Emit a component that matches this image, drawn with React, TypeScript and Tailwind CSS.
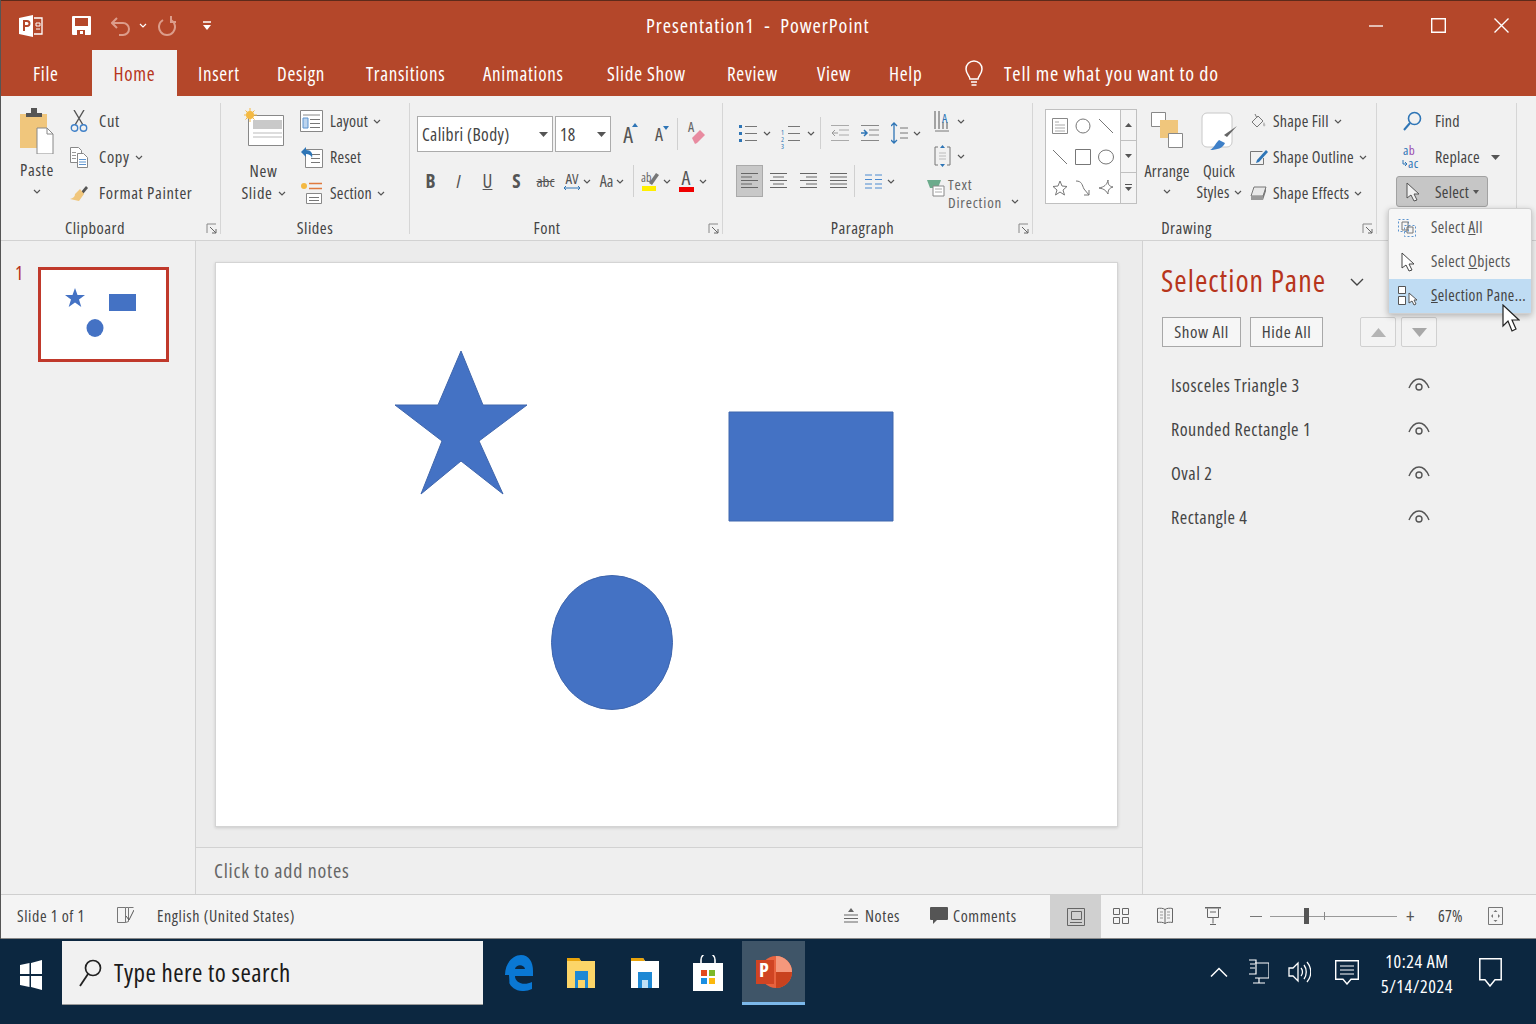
import React from "react";

const S = ({ w, h, children, className = "" }: { w: number; h: number; children: React.ReactNode; className?: string }) => (
  <svg width={w} height={h} viewBox={`0 0 ${w} ${h}`} fill="none" className={"shrink-0 " + className}>{children}</svg>
);
const Chev = ({ c = "#555" }: { c?: string }) => (
  <S w={8} h={5}><path d="M1 1l3 3 3-3" stroke={c} strokeWidth="1.2" /></S>
);
const Tri = () => <S w={9} h={5}><path d="M0 0h9L4.5 5z" fill="#555" /></S>;
const Launcher = () => (
  <S w={11} h={11}><path d="M1 10V1h9" stroke="#888" /><path d="M4 4l6 6M10 6v4H6" stroke="#666" /></S>
);
const Lines = ({ x = 0, y = 0, w = 16, n = 4, g = 4, c = "#777" }: { x?: number; y?: number; w?: number; n?: number; g?: number; c?: string }) => (
  <>{Array.from({ length: n }).map((_, i) => <path key={i} d={`M${x} ${y + i * g + 0.5}h${w}`} stroke={c} />)}</>
);
const Eye = () => (
  <S w={22} h={14}><path d="M1 10C4 3 8 1 11 1s7 2 10 9" stroke="#555" strokeWidth="1.4" /><circle cx="11" cy="9" r="3" stroke="#555" strokeWidth="1.4" /></S>
);
const Cell = ({ className, children }: { className: string; children?: React.ReactNode }) => (
  <div className={"flex items-center justify-center shrink-0 " + className}>{children}</div>
);
const Sep = ({ className = "" }: { className?: string }) => <div className={"w-px h-[32px] bg-[#d0d0d0] shrink-0 " + className} />;
const Group = ({ className, label, labelClass = "", launcher, children }: { className: string; label: string; labelClass?: string; launcher?: boolean; children: React.ReactNode }) => (
  <div className={"h-[131px] shrink-0 " + className}>
    <div className="h-[114px]">{children}</div>
    <div className="h-[22px] grid grid-cols-[1fr_auto_1fr] items-center">
      <span />
      <span className={"text-[16.5px] tracking-[0.5px] leading-[22px] text-[#444] " + labelClass}>{label}</span>
      {launcher ? <span className="justify-self-end mr-[3px] flex"><Launcher /></span> : <span />}
    </div>
  </div>
);
const Row = ({ icon, iconW, label, chev, narrow }: { icon: React.ReactNode; iconW: string; label: string; chev?: boolean; narrow?: boolean }) => (
  <div className={"h-[36px] flex items-center text-[#444] whitespace-nowrap " + (narrow ? "text-[16px] tracking-[0.25px]" : "text-[16.5px] tracking-[0.65px]")}>
    <div className={"flex items-center shrink-0 " + iconW}>{icon}</div>
    <span>{label}</span>
    {chev && <span className="ml-[5px] flex"><Chev /></span>}
  </div>
);

const PptLogo = () => (
  <S w={24} h={22}>
    <path d="M0 3l14-3v22L0 19z" fill="#fff" />
    <path d="M4 5h4a3 3 0 010 7H6v4H4zM6 7v3h2a1.500 1.500 0 000-3z" fill="#b4472a" />
    <path d="M15 3h8v16h-8" stroke="#fff" strokeWidth="1.3" />
    <path d="M17 8h4v3h-4zM17 14h4" stroke="#fff" />
  </S>
);

const tabs = [
  { t: "File", c: "w-[92px] pl-[33px] text-white" },
  { t: "Home", c: "w-[85px] justify-center bg-[#f1f1f1] text-[#b7351c]" },
  { t: "Insert", c: "w-[100px] pl-[21px] text-white" },
  { t: "Design", c: "w-[89px] text-white" },
  { t: "Transitions", c: "w-[117px] text-white" },
  { t: "Animations", c: "w-[124px] text-white" },
  { t: "Slide Show", c: "w-[120px] text-white" },
  { t: "Review", c: "w-[90px] text-white" },
  { t: "View", c: "w-[72px] text-white" },
  { t: "Help", c: "w-[75px] text-white" },
];

const TitleBar = () => (
  <div className="h-[50px] shrink-0 bg-[#b4472a] border-t border-[#5d2a1a] flex items-center text-white">
    <div className="w-[646px] flex items-center shrink-0">
      <div className="ml-[19px]"><PptLogo /></div>
      <div className="ml-[29px]">
        <S w={19} h={19}>
          <path d="M0 1a1 1 0 011-1h17a1 1 0 011 1v17a1 1 0 01-1 1H1a1 1 0 01-1-1z" fill="#fff" />
          <path d="M3 2h13v8H3z" fill="#b4472a" /><path d="M5 14h8v5H5z" fill="#b4472a" /><path d="M8 15h3v3H8z" fill="#fff" />
        </S>
      </div>
      <div className="ml-[20px]">
        <S w={20} h={20}><path d="M6 2L1 7l5 5" stroke="#dc9d8b" strokeWidth="2" /><path d="M1 7h11a6 6 0 010 12H8" stroke="#dc9d8b" strokeWidth="2" /></S>
      </div>
      <div className="ml-[8px] flex"><Chev c="#fff" /></div>
      <div className="ml-[10px]">
        <S w={19} h={20}><path d="M6 4a8 8 0 108 0" stroke="#dc9d8b" strokeWidth="2" /><path d="M14 0v6h5" stroke="#dc9d8b" strokeWidth="2" /></S>
      </div>
      <div className="ml-[27px]">
        <S w={8} h={10}><path d="M0 1h8" stroke="#fff" strokeWidth="1.5" /><path d="M0 4h8L4 9z" fill="#fff" /></S>
      </div>
    </div>
    <div className="flex-1 text-[20px] tracking-[1px] whitespace-pre">Presentation1  -  PowerPoint</div>
    <div className="flex items-center shrink-0">
      <S w={14} h={2}><path d="M0 1h14" stroke="#fff" strokeWidth="1.3" /></S>
      <div className="ml-[48px]"><S w={15} h={15}><path d="M.7.7h13.6v13.6H.7z" stroke="#fff" strokeWidth="1.4" /></S></div>
      <div className="ml-[48px] mr-[27px]"><S w={15} h={15}><path d="M.5.5l14 14M14.5.5l-14 14" stroke="#fff" strokeWidth="1.4" /></S></div>
    </div>
  </div>
);

const TabRow = () => (
  <div className="h-[46px] shrink-0 bg-[#b4472a] flex items-stretch text-[19px] tracking-[0.7px] pt-[2px]">
    {tabs.map((t) => <div key={t.t} className={"flex items-center shrink-0 -mt-[2px] pt-[2px] " + t.c}>{t.t}</div>)}
    <div className="w-[40px] flex items-center justify-start shrink-0">
      <S w={20} h={28}>
        <path d="M6 19c0-3-4-5-4-10a8 8 0 0116 0c0 5-4 7-4 10z" stroke="#fff" strokeWidth="1.5" />
        <path d="M7 22h6M7.5 25h5" stroke="#fff" strokeWidth="1.5" />
      </S>
    </div>
    <div className="flex items-center text-white whitespace-nowrap text-[20px] tracking-[0.8px]">Tell me what you want to do</div>
  </div>
);

const Paste = () => (
  <S w={34} h={46}>
    <path d="M0 6h27v34H0z" fill="#f0c67c" />
    <path d="M6 5h5V0h6v5h5v4H6z" fill="#555" />
    <path d="M17 20h10l6 6v20H17z" fill="#fff" stroke="#888" />
    <path d="M27 20v6h6" stroke="#888" />
  </S>
);

const Clipboard = () => (
  <Group className="w-[221px] border-r border-[#d6d6d6]" label="Clipboard" labelClass="mr-[30px]" launcher>
    <div className="flex pl-[20px]">
      <div className="w-[34px] flex flex-col items-center pt-[5px] text-[16.5px] tracking-[0.65px] text-[#444]">
        <Paste />
        <div className="mt-[6px] h-[20px] leading-[20px]">Paste</div>
        <div className="mt-[9px] flex"><Chev /></div>
      </div>
      <div className="ml-[16px]">
        <Row iconW="w-[29px]" label="Cut" icon={
          <S w={18} h={22}><path d="M4 0l9 15M14 0L5 15" stroke="#555" strokeWidth="1.4" /><circle cx="4.5" cy="18" r="3.2" stroke="#3f80c8" strokeWidth="1.4" /><circle cx="13.5" cy="18" r="3.2" stroke="#3f80c8" strokeWidth="1.4" /></S>
        } />
        <Row iconW="w-[29px]" label="Copy" chev icon={
          <S w={18} h={21}><path d="M.5.5h8l3 3v12H.5z" fill="#fff" stroke="#888" /><path d="M7.5 6.5h6l4 4v10h-10z" fill="#fff" stroke="#888" /><Lines x={9} y={12} w={7} n={3} g={2.5} c="#5d94cf" /><Lines x={2} y={5} w={4} n={3} g={3} c="#999" /></S>
        } />
        <Row iconW="w-[29px]" label="Format Painter" icon={
          <S w={18} h={18}><path d="M11 8l5-6 2 2-5 6z" fill="#555" /><path d="M10 5l4 5-5 7-9-2c3-1 5-2 5-5z" fill="#f0c67c" /></S>
        } />
      </div>
    </div>
  </Group>
);

const Slides = () => (
  <Group className="w-[189px] border-r border-[#d6d6d6]" label="Slides">
    <div className="flex pl-[20px] text-[16.5px] tracking-[0.65px] text-[#444]">
      <div className="w-[45px] flex flex-col items-center pt-[5px]">
        <S w={40} h={40}>
          <path d="M4.5 7.5h35v30h-35z" fill="#fff" stroke="#888" />
          <path d="M9 12h29v9H9z" fill="#c9c9c9" /><path d="M9 25h29M9 29h29" stroke="#bbb" />
          <circle cx="6" cy="7" r="4" fill="#f4b942" /><path d="M6 0v14M0 7h13M1.5 2.5l9 9M10.500 2.500l-9 9" stroke="#f4b942" />
        </S>
        <div className="mt-[13px] leading-[20px]">New</div>
        <div className="mt-[2px] leading-[20px] flex items-center whitespace-nowrap">Slide<span className="ml-[5px] flex"><Chev /></span></div>
      </div>
      <div className="ml-[14px]">
        <Row narrow iconW="w-[30px]" label="Layout" chev icon={
          <S w={23} h={22}><path d="M.5.5h22v21H.5z" fill="#fff" stroke="#888" /><path d="M3 5h17" stroke="#888" /><path d="M3 8h5v10H3z" fill="#bcd4ee" stroke="#5d94cf" /><Lines x={10} y={9} w={10} n={3} g={4} /></S>
        } />
        <Row narrow iconW="w-[30px]" label="Reset" icon={
          <S w={23} h={22}><path d="M5.500 3.500h17v18h-17z" fill="#fff" stroke="#888" /><Lines x={11} y={8} w={9} n={3} g={4} /><path d="M1 6l5-5v3c5 0 7 3 6 8-1-3-3-4-6-4v3z" fill="#2e75b6" /></S>
        } />
        <Row narrow iconW="w-[30px]" label="Section" chev icon={
          <S w={22} h={22}><circle cx="4" cy="4" r="3" fill="#f4b942" /><path d="M9 1.500h13M9 6.500h13" stroke="#e07a3e" strokeWidth="1.5" /><path d="M6.500 11.500h15v10h-15z" fill="#fff" stroke="#888" /><Lines x={9} y={15} w={10} n={2} g={3} /></S>
        } />
      </div>
    </div>
  </Group>
);

const Combo = ({ className, label }: { className: string; label: string }) => (
  <div className={"h-[36px] bg-white border border-[#ababab] flex items-center justify-between pl-[4px] pr-[4px] text-[17.5px] tracking-[0.35px] text-[#444] shrink-0 " + className}>
    <span className="whitespace-nowrap">{label}</span><Tri />
  </div>
);

const Font = () => (
  <Group className="w-[313px] border-r border-[#d6d6d6]" label="Font" labelClass="mr-[38px]" launcher>
    <div className="pl-[7px] pt-[13px]">
      <div className="flex items-center">
        <Combo className="w-[136px]" label="Calibri (Body)" />
        <Combo className="w-[56px] ml-[2px]" label="18" />
        <Cell className="w-[24px] ml-[5px] text-[22px] text-[#555] relative">A<span className="absolute right-[2px] top-[5px] w-0 h-0 border-x-[3px] border-x-transparent border-b-[4px] border-b-[#2e75b6]" /></Cell>
        <Cell className="w-[24px] ml-[7px] text-[18px] text-[#555] relative">A<span className="absolute right-[2px] top-[5px] w-0 h-0 border-x-[3px] border-x-transparent border-t-[4px] border-t-[#2e75b6]" /></Cell>
        <Sep className="ml-[6px] h-[26px]" />
        <Cell className="w-[24px] ml-[6px] relative">
          <span className="absolute left-[4px] top-[-4px] text-[14px] leading-[14px] text-[#666]">A</span>
          <S w={17} h={21}><path d="M4 14l8-8 5 5-8 8-2 1z" fill="#e88ba0" /></S>
        </Cell>
      </div>
      <div className="flex items-center h-[32px] mt-[13px] text-[#555] text-[19px]">
        <Cell className="w-[27px] font-bold">B</Cell>
        <Cell className="w-[29px] italic">I</Cell>
        <Cell className="w-[29px] underline">U</Cell>
        <Cell className="w-[29px] font-bold">S</Cell>
        <Cell className="w-[29px] text-[15px] line-through">abc</Cell>
        <Cell className="w-[36px]">
          <div className="flex flex-col items-center leading-[14px] text-[15px] -ml-[2px]">AV<S w={18} h={6}><path d="M1 3h16M3 1L1 3l2 2M15 1l2 2-2 2" stroke="#2e75b6" /></S></div>
          <span className="flex ml-[2px]"><Chev /></span>
        </Cell>
        <Cell className="w-[32px] text-[16px]">Aa<span className="flex ml-[3px]"><Chev /></span></Cell>
        <Sep className="ml-[5px] h-[26px]" />
        <Cell className="w-[24px] ml-[4px] relative">
          <span className="absolute left-[3px] top-[2px] text-[12px] leading-[12px] text-[#666]">ab</span>
          <S w={17} h={22}><path d="M7 13l7-10 3 2-7 10z" fill="#777" /><path d="M0 16h14v5H0z" fill="#ffef00" /></S>
        </Cell>
        <span className="flex ml-[1px]"><Chev /></span>
        <Cell className="w-[24px] ml-[3px]">
          <div className="flex flex-col items-center leading-[16px] text-[#555] text-[20px]">A<span className="w-[15px] h-[5px] bg-[#f00000] mt-[1px]" /></div>
        </Cell>
        <span className="flex ml-[1px]"><Chev /></span>
      </div>
    </div>
  </Group>
);

const Bullets = () => (
  <S w={20} h={20}><path d="M1 2h3v3H1zM1 9h3v3H1zM1 16h3v3H1z" fill="#2e75b6" /><path d="M7 3.500h12M7 10.500h12M7 17.500h12" stroke="#777" /></S>
);
const AlignIcon = ({ kind }: { kind: "l" | "c" | "r" | "j" }) => {
  const rows = kind === "j" ? [0, 0, 0, 0, 0] : [0, 3, 0, 3, 0];
  return (
    <S w={17} h={16}>
      {rows.map((d, i) => {
        const w = 17 - (kind === "j" ? 0 : d * 2);
        const x = kind === "l" || kind === "j" ? 0 : kind === "c" ? (17 - w) / 2 : 17 - w;
        return <path key={i} d={`M${x} ${i * 3.5 + 0.5}h${w}`} stroke="#666" />;
      })}
    </S>
  );
};

const Paragraph = () => (
  <Group className="w-[310px] border-r border-[#d6d6d6]" label="Paragraph" labelClass="mr-[30px]" launcher>
    <div className="flex pl-[13px]">
      <div className="w-[194px] pt-[14px]">
        <div className="flex items-center h-[32px]">
          <Cell className="w-[24px]"><Bullets /></Cell>
          <Cell className="w-[14px]"><Chev /></Cell>
          <Cell className="w-[34px] relative">
            <span className="absolute left-[7px] top-[6px] text-[7px] leading-[7px] text-[#2e75b6] flex flex-col"><span>1</span><span>2</span><span>3</span></span>
            <S w={20} h={20}><path d="M7 3.500h12M7 10.500h12M7 17.500h12" stroke="#777" /></S>
          </Cell>
          <Cell className="w-[6px]"><Chev /></Cell>
          <Sep className="ml-[6px] h-[26px]" />
          <Cell className="w-[24px] ml-[7px]">
            <S w={18} h={16}><path d="M0 .500h18M8 5h10M8 10h10M0 15.500h18" stroke="#aaa" /><path d="M7 8H1M4 5L1 8l3 3" stroke="#999" /></S>
          </Cell>
          <Cell className="w-[24px] ml-[6px]">
            <S w={18} h={16}><path d="M0 .500h18M8 5h10M8 10h10M0 15.500h18" stroke="#888" /><path d="M0 8h6M3 5l3 3-3 3" stroke="#2e75b6" strokeWidth="1.5" /></S>
          </Cell>
          <Cell className="w-[24px] ml-[6px]">
            <S w={18} h={22}><path d="M3 1v20M0 4l3-3 3 3M0 18l3 3 3-3" stroke="#2e75b6" strokeWidth="1.3" /><path d="M9 6h8M9 11h8M9 16h8" stroke="#777" /></S>
          </Cell>
          <Cell className="w-[10px]"><Chev /></Cell>
        </div>
        <div className="flex items-center h-[32px] mt-[16px]">
          <Cell className="w-[27px] h-[32px] bg-[#c8c8c8] border border-[#aaa]"><AlignIcon kind="l" /></Cell>
          <Cell className="w-[24px] ml-[3px]"><AlignIcon kind="c" /></Cell>
          <Cell className="w-[24px] ml-[6px]"><AlignIcon kind="r" /></Cell>
          <Cell className="w-[24px] ml-[6px]"><AlignIcon kind="j" /></Cell>
          <Sep className="ml-[4px] h-[26px]" />
          <Cell className="w-[24px] ml-[6px]">
            <S w={17} h={15}><path d="M0 1h7M10 1h7M0 5.500h7M10 5.500h7M0 10h7M10 10h7M0 14h7M10 14h7" stroke="#4a8ad0" /></S>
          </Cell>
          <Cell className="w-[10px] ml-[1px]"><Chev /></Cell>
        </div>
      </div>
      <div className="w-[100px] -ml-[1px]">
        <div className="h-[36px] flex items-center">
          <Cell className="w-[26px] relative">
            <span className="absolute left-[13px] top-[3px] text-[12px] leading-[12px] text-[#2e75b6]">A</span>
            <S w={17} h={22}><path d="M1 1v18M5 1v18M9 12v7M13 12v7" stroke="#555" /><path d="M1 21h14" stroke="#777" /></S>
          </Cell>
          <Cell className="w-[12px]"><Chev /></Cell>
        </div>
        <div className="h-[34px] flex items-center">
          <Cell className="w-[26px]"><S w={17} h={24}><path d="M4 3H1v18h3M13 3h3v18h-3" stroke="#777" /><path d="M5 9h7M5 12h7M5 15h7" stroke="#bbb" /><path d="M8.500 1L6 4h5zM8.500 23L6 20h5z" fill="#2e75b6" /></S></Cell>
          <Cell className="w-[12px]"><Chev /></Cell>
        </div>
        <div className="flex -ml-[2px]">
          <div className="w-[21px] pt-[6px]"><S w={18} h={18}><path d="M0 1h14l-3 8H3z" fill="#6cab8c" /><path d="M6 7h11v10H6z" fill="#fff" stroke="#888" /><path d="M8 10h7M8 13h7" stroke="#aaa" /></S></div>
          <div className="text-[15px] tracking-[0.8px] leading-[18px] text-[#666] pt-[2px] w-[54px] whitespace-nowrap">Text<br />Direction</div>
          <div className="flex items-end pb-[7px] ml-[9px]"><Chev /></div>
        </div>
      </div>
    </div>
  </Group>
);

const shapeCells = [
  <S key="a" w={16} h={16}><path d="M.5.5h15v15H.5z" fill="#fff" stroke="#888" /><path d="M3 4h4M3 7h10M3 10h10M3 13h10" stroke="#aaa" /></S>,
  <S key="b" w={16} h={16}><circle cx="8" cy="8" r="7" stroke="#777" /></S>,
  <S key="c" w={16} h={16}><path d="M1 1l14 14" stroke="#777" /></S>,
  <S key="d" w={16} h={16}><path d="M1 1l14 14" stroke="#777" /></S>,
  <S key="e" w={16} h={16}><path d="M.5.5h15v15H.5z" stroke="#777" /></S>,
  <S key="f" w={16} h={16}><ellipse cx="8" cy="8" rx="7.500" ry="7" stroke="#777" /></S>,
  <S key="g" w={16} h={16}><path d="M8 1l2 5 5 .5-4 3.500 1.500 5L8 12l-4.500 3L5 10 1 6.500 6 6z" stroke="#777" /></S>,
  <S key="h" w={16} h={16}><path d="M1 1c6 0 6 4 8 8l5 6M14 10v5h-5" stroke="#777" /></S>,
  <S key="i" w={16} h={16}><path d="M10 0c0 5 1 6 5 7-3 1-5 2-5 7-2-3-3-5-9-6 5-1 8-3 9-8z" stroke="#777" /></S>,
];

const Drawing = () => (
  <Group className="w-[344px] border-r border-[#d6d6d6]" label="Drawing" labelClass="mr-[36px]" launcher>
    <div className="flex pl-[12px] text-[16px] tracking-[0.25px] text-[#444]">
      <div className="mt-[6px] w-[92px] h-[95px] border border-[#c0c0c0] bg-white flex shrink-0">
        <div className="w-[75px] grid grid-cols-3 grid-rows-3 place-items-center px-[2px]">{shapeCells}</div>
        <div className="w-[16px] flex flex-col border-l border-[#c0c0c0] bg-[#f4f4f4]">
          <Cell className="flex-1 border-b border-[#c0c0c0]"><S w={7} h={4}><path d="M0 4h7L3.500 0z" fill="#555" /></S></Cell>
          <Cell className="flex-1 border-b border-[#c0c0c0]"><S w={7} h={4}><path d="M0 0h7L3.500 4z" fill="#555" /></S></Cell>
          <Cell className="flex-1"><S w={7} h={7}><path d="M0 .500h7" stroke="#555" /><path d="M0 3h7L3.500 7z" fill="#555" /></S></Cell>
        </div>
      </div>
      <div className="w-[48px] ml-[6px] flex flex-col items-center pt-[9px] shrink-0">
        <S w={32} h={36}><path d="M.5.500h14v14H.5z" fill="#fff" stroke="#888" /><path d="M9 8h18v18H9z" fill="#f0c67c" /><path d="M17.500 21.500h14v14h-14z" fill="#fff" stroke="#888" /></S>
        <div className="mt-[13px] leading-[20px]">Arrange</div>
        <div className="mt-[8px] flex"><Chev /></div>
      </div>
      <div className="w-[48px] ml-[4px] flex flex-col items-center pt-[9px] shrink-0">
        <S w={36} h={38}>
          <rect x="1" y="1" width="30" height="34" rx="5" fill="#fff" stroke="#c8c8c8" />
          <path d="M36 14L26 25l-3-2z" fill="#666" /><path d="M9 38c3-1 5-6 9-10l6 3c-2 5-8 7-15 7z" fill="#3f80c8" />
        </S>
        <div className="mt-[11px] leading-[20px]">Quick</div>
        <div className="mt-[1px] leading-[20px] flex items-center whitespace-nowrap">Styles<span className="ml-[4px] flex"><Chev /></span></div>
      </div>
      <div className="ml-[7px]">
        <Row narrow iconW="w-[23px]" label="Shape Fill" chev icon={
          <S w={16} h={16}><path d="M2 9l6-6 5 5-6 6z" stroke="#777" /><path d="M5 1l2 4" stroke="#777" /><path d="M14 9c1 2 2 3 1 4s-2 0-2-1 0-2 1-3z" fill="#bbb" /></S>
        } />
        <Row narrow iconW="w-[23px]" label="Shape Outline" chev icon={
          <S w={19} h={17}><path d="M.5 2.500h12M.5 2.500v13h13V9" stroke="#777" /><path d="M7 11l9-10 2 2-9 10-3 1z" fill="#2e75b6" /></S>
        } />
        <Row narrow iconW="w-[23px]" label="Shape Effects" chev icon={
          <S w={17} h={16}><path d="M1 11l3-9h12l-3 9z" fill="#e8e8e8" stroke="#777" /><path d="M1 11h12v4H1z" fill="#999" /><path d="M13 11l3-9v4l-3 9z" fill="#777" /></S>
        } />
      </div>
    </div>
  </Group>
);

const Editing = () => (
  <div className="w-[140px] h-[110px] shrink-0 border-r border-[#d6d6d6] pl-[19px] text-[16px] tracking-[0.25px] text-[#444]">
    <Row narrow iconW="w-[39px]" label="Find" icon={
      <div className="pl-[7px] flex"><S w={19} h={20}><circle cx="11.500" cy="7.500" r="6" stroke="#2e75b6" strokeWidth="1.6" /><path d="M7 12l-6 7" stroke="#2e75b6" strokeWidth="2" /></S></div>
    } />
    <div className="h-[36px] flex items-center whitespace-nowrap">
      <div className="w-[39px] pl-[6px] shrink-0 flex">
        <div className="flex flex-col text-[13px] leading-[13px] tracking-[0.3px]">
          <span className="pl-[1px]"><span className="text-[#2e75b6]">a</span><span className="text-[#9b4fb0]">b</span></span>
          <span className="flex items-center text-[#2e75b6]"><S w={6} h={9}><path d="M1 1v4h4M3 3l2 2-2 2" stroke="#2e75b6" /></S>ac</span>
        </div>
      </div>
      <span>Replace</span>
      <span className="ml-[11px] flex"><Tri /></span>
    </div>
    <div className="h-[31px] w-[92px] mt-[1px] flex items-center rounded-[3px] bg-[#c6c6c6] border border-[#a2a2a2] whitespace-nowrap">
      <div className="w-[38px] pl-[9px] flex shrink-0">
        <S w={14} h={20}><path d="M1 1v15l4-3 3 6 3-1-3-6h5z" fill="#f1f1f1" stroke="#555" /></S>
      </div>
      <span>Select</span>
      <span className="ml-[4px] flex"><S w={6} h={4}><path d="M0 0h6L3 4z" fill="#555" /></S></span>
    </div>
  </div>
);

const Ribbon = () => (
  <div className="h-[145px] shrink-0 bg-[#f1f1f1] border-b border-[#d2d2d2] pt-[7px] flex">
    <Clipboard /><Slides /><Font /><Paragraph /><Drawing /><Editing />
  </div>
);

const ThumbPane = () => (
  <div className="w-[196px] shrink-0 border-r border-[#d2d2d2] pl-[15px] pt-[26px] flex items-start">
    <span className="w-[23px] text-[19px] leading-[20px] -mt-[4px] text-[#b7351c]">1</span>
    <div className="w-[131px] h-[95px] border-[3px] border-[#c0392b] bg-white">
      <svg width="125" height="89" viewBox="0 0 125 89" className="block">
        <path d="M34 18l2.500 7h7.500l-6 4.500 2.300 7.500-6.300-4.500-6.300 4.500 2.300-7.500-6-4.500h7.500z" fill="#4472c4" />
        <path d="M68 24h27v17H68z" fill="#4472c4" />
        <ellipse cx="54" cy="58" rx="8.500" ry="9" fill="#4472c4" />
      </svg>
    </div>
  </div>
);

const SlideCanvas = () => (
  <div className="flex-1 flex flex-col min-w-0">
    <div className="flex-1 pl-[19px] pt-[21px] bg-[#ececec]">
      <div className="w-[903px] h-[565px] bg-white border border-[#d4d4d4] shadow-[0_1px_3px_rgba(0,0,0,0.15)]">
        <svg width="901" height="563" viewBox="216 263 901 563" className="block">
          <path d="M461 351l22 54h44l-48 36 24 53-42-33-40 33 21-53-47-36h43z" fill="#4472c4" stroke="#3f66ad" />
          <path d="M729 412h164v109H729z" fill="#4472c4" stroke="#3f66ad" />
          <ellipse cx="612" cy="642.500" rx="60.500" ry="67" fill="#4472c4" stroke="#3f66ad" />
        </svg>
      </div>
    </div>
    <div className="h-[47px] shrink-0 border-t border-[#d2d2d2] bg-[#efefef] flex items-center pl-[18px] text-[20px] tracking-[0.8px] text-[#666]">Click to add notes</div>
  </div>
);

const paneRows = ["Isosceles Triangle 3", "Rounded Rectangle 1", "Oval 2", "Rectangle 4"];

const SelectionPane = () => (
  <div className="w-[394px] shrink-0 border-l border-[#d2d2d2] bg-[#f0f0f0] pl-[18px]">
    <div className="h-[76px] flex items-center">
      <span className="text-[#b7351c] text-[30px] tracking-[1px] leading-[36px] whitespace-nowrap pt-[4px] w-[189px]">Selection Pane</span>
      <span className="flex pt-[6px]"><S w={14} h={9}><path d="M1 1l6 6 6-6" stroke="#444" strokeWidth="1.4" /></S></span>
    </div>
    <div className="flex items-center ml-[1px] text-[17px] tracking-[0.6px] text-[#444]">
      <div className="w-[79px] h-[30px] bg-[#f6f6f6] border border-[#a8a8a8] flex items-center justify-center">Show All</div>
      <div className="w-[73px] h-[30px] ml-[9px] bg-[#f6f6f6] border border-[#a8a8a8] flex items-center justify-center">Hide All</div>
      <div className="w-[36px] h-[30px] ml-[37px] bg-[#f3f3f3] border border-[#d0d0d0] rounded-[2px] flex items-center justify-center"><S w={15} h={9}><path d="M0 9h15L7.500 0z" fill="#b4b4b4" /></S></div>
      <div className="w-[36px] h-[30px] ml-[5px] bg-[#f3f3f3] border border-[#d0d0d0] rounded-[2px] flex items-center justify-center"><S w={15} h={9}><path d="M0 0h15L7.500 9z" fill="#a8a8a8" /></S></div>
    </div>
    <div className="mt-[16px] pl-[10px]">
      {paneRows.map((r) => (
        <div key={r} className="h-[44px] flex items-center text-[18px] tracking-[0.5px] text-[#444]">
          <span className="w-[237px] whitespace-nowrap">{r}</span><Eye />
        </div>
      ))}
    </div>
  </div>
);

const StatusBar = () => (
  <div className="h-[45px] shrink-0 bg-[#f4f4f4] border-t border-[#cfcfcf] border-b border-b-[#888] pb-[1px] flex items-center text-[16px] tracking-[0.6px] text-[#444] whitespace-nowrap">
    <span className="w-[100px] pl-[17px] shrink-0">Slide 1 of 1</span>
    <span className="ml-[17px] flex shrink-0"><S w={17} h={18}><path d="M.5.500h8v15h-8zM8.500 15.500l3-1v-14h-3M11.500.500h5" stroke="#777" /><path d="M9 9l3 4 5-10" stroke="#555" /></S></span>
    <span className="ml-[23px] w-[687px] shrink-0">English (United States)</span>
    <span className="flex shrink-0"><S w={14} h={16}><path d="M7 0l3 4H4z" fill="#666" /><path d="M0 7h14M0 10.500h14M0 14h14" stroke="#666" /></S></span>
    <span className="ml-[7px] w-[65px] shrink-0">Notes</span>
    <span className="flex shrink-0"><S w={18} h={18}><path d="M1 0h16a1 1 0 011 1v11a1 1 0 01-1 1H7l-4 4v-4H1a1 1 0 01-1-1V1a1 1 0 011-1z" fill="#555" /></S></span>
    <span className="ml-[5px] w-[97px] shrink-0">Comments</span>
    <Cell className="w-[51px] h-[43px] self-start bg-[#d0d0d0]"><S w={18} h={18}><path d="M.5.500h17v17H.5z" stroke="#666" /><path d="M4.500 3.500h10v8h-10z" stroke="#666" /><path d="M3 14.500h12" stroke="#666" /></S></Cell>
    <Cell className="w-[40px]"><S w={16} h={16}><path d="M.5.500h6v6h-6zM9.500.500h6v6h-6zM.5 9.500h6v6h-6zM9.500 9.500h6v6h-6z" stroke="#666" /></S></Cell>
    <Cell className="w-[48px]"><S w={16} h={18}><path d="M8 2.500C6 1 3 1 .5 1.500v14c2.500-.5 5.500-.5 7.500 1 2-1.500 5-1.500 7.500-1v-14C13 1 10 1 8 2.500zM8 2.500v14" stroke="#666" /><path d="M3 5h3M3 8h3M3 11h3M10 5h3M10 8h3M10 11h3" stroke="#999" /></S></Cell>
    <Cell className="w-[48px]"><S w={16} h={18}><path d="M0 .500h16" stroke="#666" strokeWidth="2" /><path d="M2.500 1.500v9h11v-9M8 10.500v6M5 17.500h6M5 5h6" stroke="#666" /></S></Cell>
    <span className="ml-[13px] w-[12px] h-px bg-[#777] shrink-0" />
    <div className="ml-[8px] w-[127px] h-px bg-[#999] shrink-0 flex items-center relative">
      <span className="ml-[34px] w-[5px] h-[16px] bg-[#555] shrink-0" />
      <span className="ml-[15px] w-px h-[8px] bg-[#888] shrink-0" />
    </div>
    <span className="ml-[9px] text-[20px] w-[12px] leading-none text-[#555] shrink-0">+</span>
    <span className="ml-[20px] w-[26px] shrink-0 tracking-[0.2px]">67%</span>
    <span className="ml-[24px] flex shrink-0"><S w={15} h={18}><path d="M.5.500h14v17H.5z" stroke="#777" /><path d="M7.500 3l2 2h-4zM7.500 15l2-2h-4zM3 9l2-2v4zM12 9l-2-2v4z" fill="#777" /></S></span>
  </div>
);

const Taskbar = () => (
  <div className="h-[85px] shrink-0 bg-[#0c2740] flex items-start text-white relative">
    <div className="w-[62px] h-[72px] flex items-center justify-center shrink-0 pb-[1px]">
      <S w={22} h={30}><path d="M0 5l9.500-2v11H0zM11 3l11-3v14H11zM0 16h9.500v11L0 25zM11 16h11v14l-11-3z" fill="#fff" /></S>
    </div>
    <div className="w-[421px] h-[64px] mt-[2px] bg-[#f1f1f1] border-b border-[#9a9a9a] flex items-center shrink-0 text-[#1a1a1a] text-[25px] tracking-[0.5px]">
      <span className="ml-[17px] flex"><S w={23} h={28}><circle cx="14" cy="9" r="7.500" stroke="#222" strokeWidth="1.7" /><path d="M9 15L1 27" stroke="#222" strokeWidth="1.8" /></S></span>
      <span className="ml-[12px]">Type here to search</span>
    </div>
    <Cell className="w-[71px] h-[64px] mt-[2px]">
      <S w={30} h={36}><path d="M1 20C1 8 9 0 17 0c8 0 12 7 12 16v5H11c0 7 9 10 17 6v7c-11 5-21 0-23-7 1 5 0-6 0-7z" fill="#0a78d4" /><path d="M11 14c1-5 9-5 10 0z" fill="#0c2740" /></S>
    </Cell>
    <Cell className="w-[48px] h-[64px] mt-[2px] ml-[3px]">
      <S w={28} h={30}><path d="M0 0h12l2 3h14v27H0z" fill="#fcd568" /><path d="M0 0h12l2 3H0z" fill="#e8a30b" /><path d="M8 13h13v17H8z" fill="#1e88d4" /><path d="M11 22h7v8h-7z" fill="#fcd568" /></S>
    </Cell>
    <Cell className="w-[79px] h-[64px] mt-[2px]">
      <S w={28} h={30}><path d="M0 0h12l2 3h14v27H0z" fill="#fff" /><path d="M0 0h12l2 3H0z" fill="#e8a30b" /><path d="M7 14h14v16H7z" fill="#1e88d4" /><path d="M11 22h6v8h-6z" fill="#bfe0f6" /></S>
    </Cell>
    <Cell className="w-[47px] h-[64px] mt-[2px]">
      <S w={30} h={36}><path d="M8 8V5a7 7 0 0114 0v3" stroke="#fff" strokeWidth="1.6" /><path d="M0 8h30v28H0z" fill="#fff" /><path d="M8 15h6v6H8z" fill="#e24a1f" /><path d="M16 15h6v6h-6z" fill="#7db928" /><path d="M8 23h6v6H8z" fill="#1a8fe3" /><path d="M16 23h6v6h-6z" fill="#fbb80d" /></S>
    </Cell>
    <div className="w-[63px] h-[64px] mt-[2px] ml-[11px] bg-[#3f5568] border-b-[3px] border-[#7cb8ea] flex items-center justify-center shrink-0 relative">
      <S w={36} h={36}>
        <circle cx="20" cy="18" r="16" fill="#e8623e" /><path d="M20 2a16 16 0 0116 16H20z" fill="#f4987c" /><path d="M20 18h16a16 16 0 01-16 16z" fill="#c9421e" />
        <path d="M0 6h18v24H0z" fill="#d04423" />
      </S>
      <span className="absolute left-[17px] top-[19px] text-[20px] leading-[20px] font-bold text-white">P</span>
    </div>
    <div className="ml-[405px] h-[66px] flex items-center shrink-0">
      <S w={18} h={10}><path d="M1 9.500l8-8 8 8" stroke="#fff" strokeWidth="1.5" /></S>
      <span className="ml-[19px] flex"><S w={22} h={26}><path d="M8 4h14v15H8M2 1h7v14H2M12 19v5M6 24h12" stroke="#fff" strokeWidth="1.2" /><path d="M3 5h5M3 9h5" stroke="#fff" /></S></span>
      <span className="ml-[19px] flex"><S w={23} h={26}><path d="M1 9h4l5-5v18l-5-5H1z" stroke="#fff" strokeWidth="1.3" /><path d="M13 9c2 2 2 6 0 8M16 6c3 4 3 10 0 14M19 3c5 6 5 14 0 20" stroke="#fff" strokeWidth="1.3" /></S></span>
      <span className="ml-[24px] flex"><S w={24} h={25}><path d="M.7.700h22.600v18.600H16L12 24l-4-4.700H.7z" stroke="#fff" strokeWidth="1.4" /><path d="M5 6h14M5 10h14M5 14h14" stroke="#fff" /></S></span>
      <div className="ml-[10px] w-[96px] flex flex-col items-center text-[18px] tracking-[0.6px] leading-[25px] shrink-0 pt-[3px]"><span>10:24 AM</span><span>5/14/2024</span></div>
      <span className="ml-[14px] flex"><S w={23} h={29}><path d="M.8.800h21.400v21H16L11 28l-5-6.200H.8z" stroke="#fff" strokeWidth="1.5" /></S></span>
    </div>
  </div>
);

const SelectMenu = () => (
  <div className="absolute left-[1388px] top-[208px] w-[144px] h-[106px] bg-[#f6f6f6] border border-[#d0d0d0] rounded-[3px] shadow-[0_2px_6px_rgba(0,0,0,0.25)] flex flex-col pt-[2px] text-[15.5px] tracking-[0.4px] text-[#555] z-10 whitespace-nowrap">
    <div className="h-[34px] flex items-center">
      <span className="w-[42px] pl-[9px] flex shrink-0"><S w={18} h={18}><path d="M.5.500h10v12H.5z" stroke="#5d94cf" strokeDasharray="2 2" /><path d="M6.500 6.500h11v11h-11z" stroke="#5d94cf" strokeDasharray="2 2" /><path d="M4 3h6v8H4zM9 8h6v6H9z" stroke="#777" /></S></span>
      <span>Select <u>A</u>ll</span>
    </div>
    <div className="h-[34px] flex items-center">
      <span className="w-[42px] pl-[12px] flex shrink-0"><S w={13} h={20}><path d="M1 1v15l4-3 3 6 3-1-3-6h5z" fill="#fff" stroke="#444" /></S></span>
      <span>Select <u>O</u>bjects</span>
    </div>
    <div className="h-[34px] flex items-center bg-[#bfdcf3] text-[#444]">
      <span className="w-[42px] pl-[9px] flex shrink-0"><S w={19} h={20}><path d="M.5.500h7v7h-7zM.5 10.500h7v8h-7z" stroke="#555" fill="#fff" /><path d="M11 7v10l3-2 2 4 2-1-2-4h3z" fill="#fff" stroke="#555" /></S></span>
      <span><u>S</u>election Pane...</span>
    </div>
  </div>
);

export default function App() {
  return (
    <div className="w-[1536px] h-[1024px] relative overflow-hidden flex flex-col bg-[#f0f0f0] font-['Open_Sans','Liberation_Sans',sans-serif] [font-stretch:75%]">
      <TitleBar />
      <TabRow />
      <Ribbon />
      <div className="flex-1 flex min-h-0">
        <ThumbPane />
        <SlideCanvas />
        <SelectionPane />
      </div>
      <StatusBar />
      <Taskbar />
      <SelectMenu />
      <div className="absolute left-[1502px] top-[304px] z-20">
        <S w={18} h={28}><path d="M1 1v21l5-5 4 10 4-2-4-9h7z" fill="#fff" stroke="#222" strokeWidth="1.2" /></S>
      </div>
      <div className="absolute left-0 top-0 w-px h-[939px] bg-[#555] z-20" />
    </div>
  );
}
